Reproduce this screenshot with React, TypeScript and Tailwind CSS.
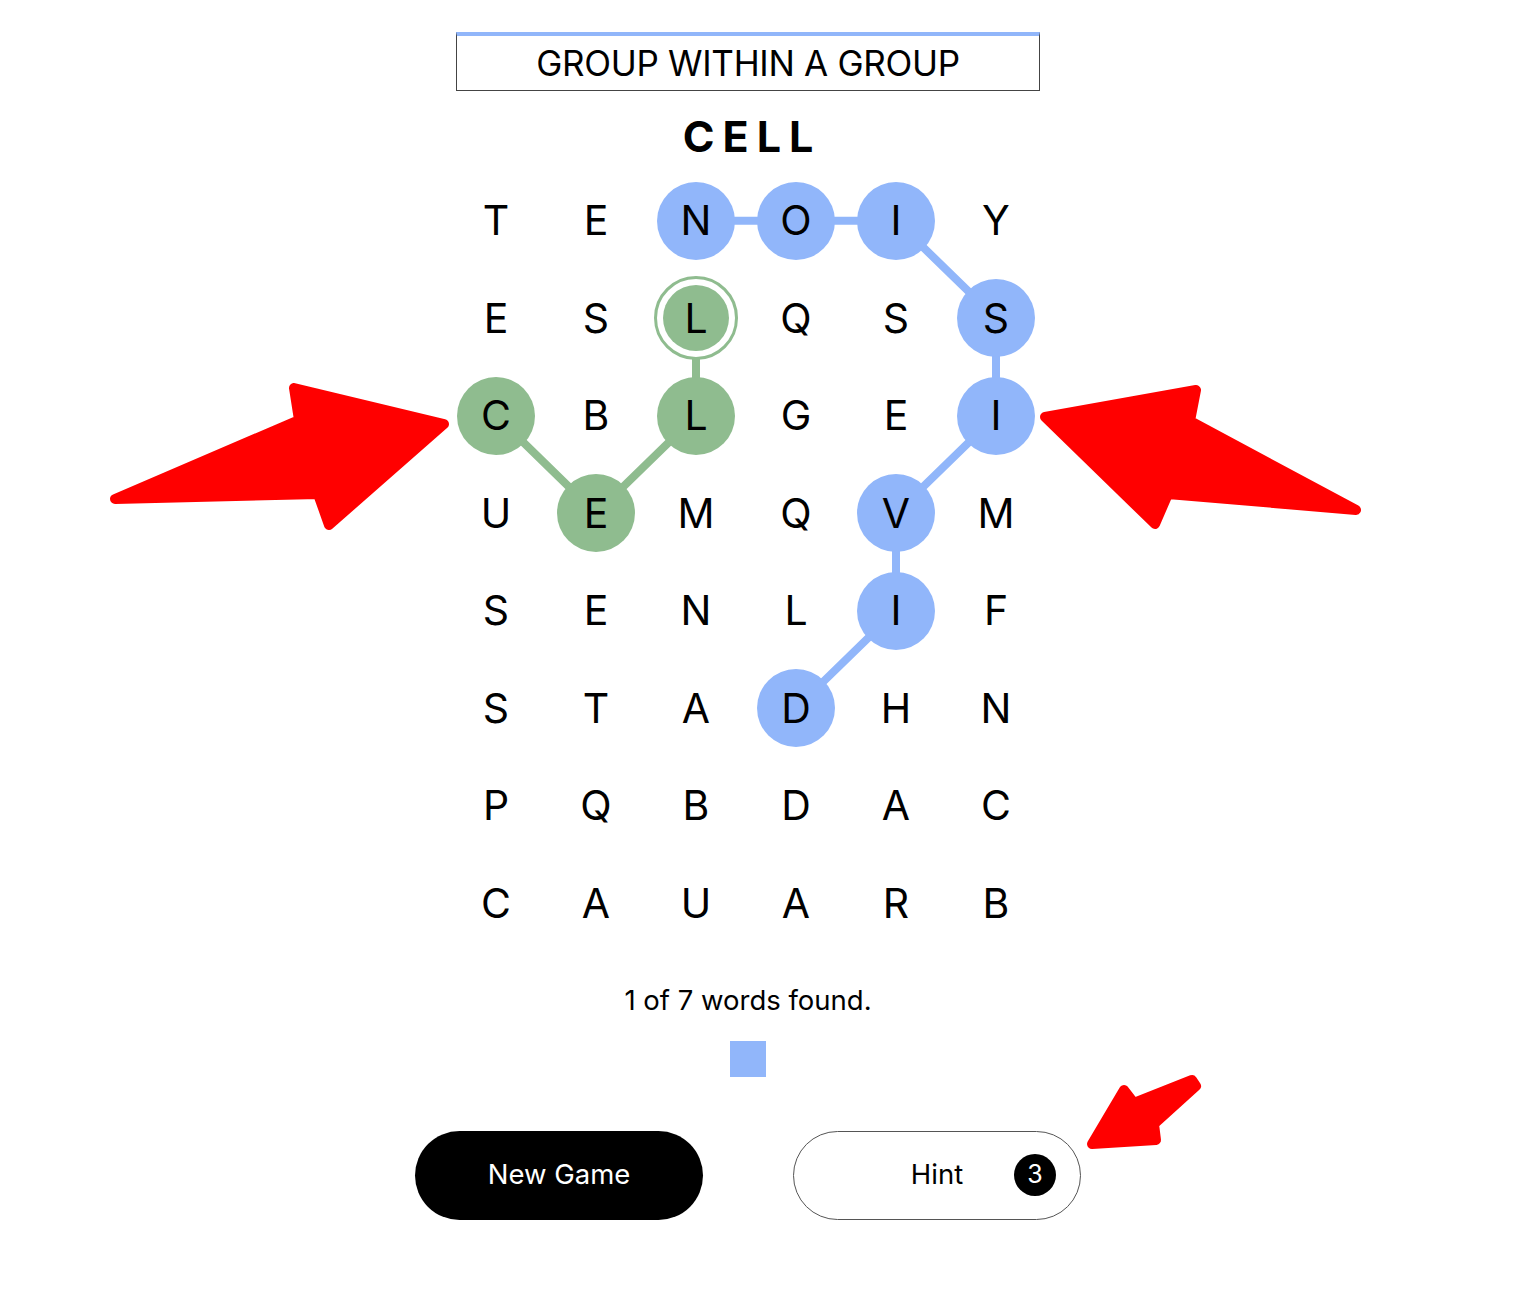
import React from 'react';

const GRID = [
  'TENOIY',
  'ESLQSS',
  'CBLGEI',
  'UEMQVM',
  'SENLIF',
  'STADHN',
  'PQBDAC',
  'CAUARB',
];

const BLUE = '#91b6fa';
const GREEN = '#8fbc8f';

const bluePath: [number, number][] = [[0, 2], [0, 3], [0, 4], [1, 5], [2, 5], [3, 4], [4, 4], [5, 3]];
const greenPath: [number, number][] = [[2, 0], [3, 1], [2, 2], [1, 2]];
const ringCell = '1-2';

const CELL_W = 100;
const CELL_H = 97.5;

const pt = ([r, c]: [number, number]) => `${c * CELL_W + CELL_W / 2},${r * CELL_H + CELL_H / 2}`;

function Arrows() {
  return (
    <svg className="absolute left-0 top-0 pointer-events-none" width="1522" height="1297" viewBox="0 0 1522 1297">
      <g fill="#ff0000" stroke="#ff0000" strokeWidth="10" strokeLinejoin="round">
        <polygon points="115,499 299,420 294,388 444,424 329,525 318,494" />
        <polygon points="1045,417 1196,390 1190,421 1356,510 1168,494 1155,524" />
        <polygon points="1092,1144 1124,1090 1134,1103 1192,1080 1196,1086 1154,1124 1156,1140" />
      </g>
    </svg>
  );
}

export default function App() {
  const blueSet = new Set(bluePath.map(([r, c]) => `${r}-${c}`));
  const greenSet = new Set(greenPath.map(([r, c]) => `${r}-${c}`));

  return (
    <div className="relative w-full min-h-[1297px] bg-white text-black" style={{ fontFamily: 'Inter, "Liberation Sans", sans-serif' }}>
      <div className="flex flex-col items-center pt-[32px] pr-[26px]">
        <div className="w-[584px] h-[59px] border border-[#444] border-t-4 border-t-[#91b6fa] flex items-center justify-center">
          <span className="text-[35px] leading-none tracking-[-0.3px]">GROUP WITHIN A GROUP</span>
        </div>

        <div className="mt-[24px] text-[43px] leading-none font-bold tracking-[8px] pl-[8px]">CELL</div>

        <div className="relative mt-[14px] mr-[4px] w-[600px]">
          <svg className="absolute left-0 top-0" width="600" height={CELL_H * 8} fill="none">
            <polyline points={bluePath.map(pt).join(' ')} stroke={BLUE} strokeWidth="8" />
            <polyline points={greenPath.map(pt).join(' ')} stroke={GREEN} strokeWidth="8" />
          </svg>
          <div className="relative grid grid-cols-6">
            {GRID.map((row, r) =>
              row.split('').map((ch, c) => {
                const key = `${r}-${c}`;
                const isBlue = blueSet.has(key);
                const isGreen = greenSet.has(key);
                const isRing = key === ringCell;
                return (
                  <div key={key} className="h-[97.5px] flex items-center justify-center">
                    {isRing ? (
                      <div className="w-[84px] h-[84px] rounded-full border-[3px] border-[#8fbc8f] bg-white flex items-center justify-center">
                        <div className="w-[66px] h-[66px] rounded-full bg-[#8fbc8f] flex items-center justify-center text-[41px] leading-none">
                          {ch}
                        </div>
                      </div>
                    ) : (
                      <div
                        className={`w-[78px] h-[78px] rounded-full flex items-center justify-center text-[41px] leading-none ${
                          isBlue ? 'bg-[#91b6fa]' : isGreen ? 'bg-[#8fbc8f]' : ''
                        }`}
                      >
                        {ch}
                      </div>
                    )}
                  </div>
                );
              })
            )}
          </div>
        </div>

        <p className="mt-[35px] text-[27.5px] leading-none">1 of 7 words found.</p>

        <div className="mt-[26px] w-[36px] h-[36px] bg-[#91b6fa]" />

        <div className="mt-[54px] flex gap-[90px]">
          <button className="w-[288px] h-[89px] rounded-full bg-black text-white text-[27.5px]">New Game</button>
          <button className="relative w-[288px] h-[89px] rounded-full border border-[#555] bg-white text-[27.5px] flex items-center justify-center">
            Hint
            <span className="absolute right-[24px] top-1/2 -translate-y-1/2 w-[42px] h-[42px] rounded-full bg-black text-white text-[25px] flex items-center justify-center">
              3
            </span>
          </button>
        </div>
      </div>
      <Arrows />
    </div>
  );
}
